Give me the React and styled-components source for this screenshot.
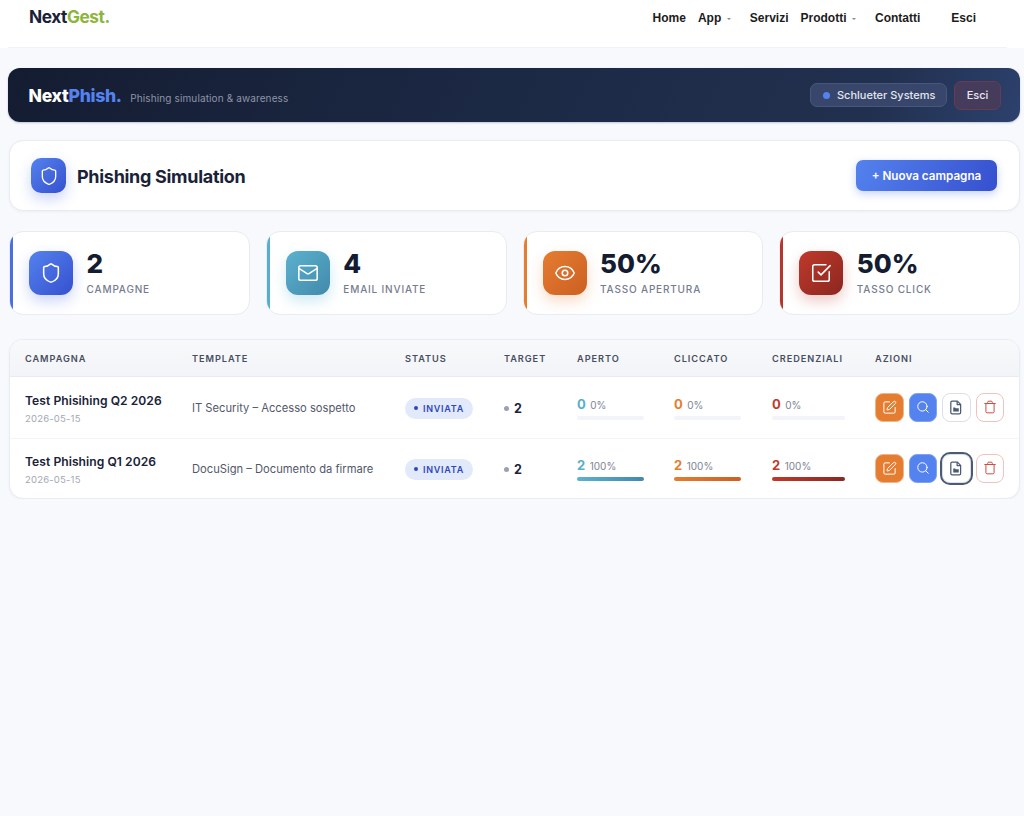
import React from 'react';
import styled, { createGlobalStyle } from 'styled-components';
import { Shield, Mail, Eye, SquareCheckBig, SquarePen, Search, Trash } from 'lucide-react';

const GlobalStyle = createGlobalStyle`
	html, body {
		margin: 0;
		padding: 0;
		background: #f7f9fd;
		font-family: 'Inter', 'Liberation Sans', sans-serif;
		color: #1a2238;
	}
`;

const TopBar = styled.div`
	background: #fff;
`;

const TopNav = styled.nav`
	height: 47px;
	margin: 0 17px 0 8px;
	border-bottom: 1px solid #f0f2f7;
	display: flex;
	justify-content: space-between;
	padding: 0 31px 0 21px;
`;

const NavLogo = styled.div`
	font-size: 17.3px;
	font-weight: 700;
	letter-spacing: -0.45px;
	line-height: 20px;
	padding-top: 7px;
	color: #1a2238;
	span {
		color: #8db53c;
	}
`;

const NavLinks = styled.div`
	display: flex;
	gap: 12px;
	padding-top: 11px;
`;

const NavLink = styled.a`
	font-family: 'Liberation Sans', sans-serif;
	font-size: 12px;
	font-weight: 700;
	line-height: 15px;
	color: #1c1c1c;
	display: flex;
	margin-left: ${(p) => p.$push || 0}px;
`;

const Caret = styled.i`
	width: 0;
	height: 0;
	border-left: 2.5px solid transparent;
	border-right: 2.5px solid transparent;
	border-top: 2.5px solid #8a8a8a;
	margin: 7px 6.5px 0 6px;
`;

const Main = styled.main`
	padding: 20px 4px 0 8px;
	display: flex;
	flex-direction: column;
`;

const Banner = styled.header`
	height: 54px;
	box-sizing: border-box;
	border-radius: 12px;
	background: linear-gradient(115deg, #141c31 0%, #1c2945 50%, #22304f 85%, #2c416d 100%);
	display: flex;
	align-items: center;
	justify-content: space-between;
	padding: 0 19px 0 20.500px;
	box-shadow: 0 1px 2px rgba(30, 50, 90, 0.25);
`;

const BrandGroup = styled.div`
	display: flex;
	align-items: baseline;
	gap: 8.500px;
`;

const BannerLogo = styled.div`
	font-size: 17.6px;
	font-weight: 800;
	letter-spacing: -0.3px;
	color: #fff;
	span {
		color: #5482ee;
	}
`;

const BannerTag = styled.div`
	font-size: 10px;
	letter-spacing: 0.12px;
	color: #8d95a8;
`;

const BannerRight = styled.div`
	display: flex;
	align-items: center;
	gap: 7px;
`;

const OrgPill = styled.div`
	height: 24px;
	width: 137px;
	box-sizing: border-box;
	border-radius: 7px;
	border: 1px solid #46587a;
	background: #37466a;
	display: flex;
	align-items: center;
	gap: 7px;
	padding-left: 12px;
	font-size: 11px;
	font-weight: 500;
	color: #e3e7ef;
`;

const OrgDot = styled.i`
	width: 7px;
	height: 7px;
	border-radius: 50%;
	background: #5482ee;
`;

const ExitButton = styled.button`
	height: 29px;
	width: 47px;
	border-radius: 7px;
	border: 1px solid #6b3a52;
	background: #453c5c;
	color: #e8e8ef;
	font: 500 11px 'Inter', sans-serif;
	padding: 0;
`;

const TitleCard = styled.section`
	margin: 18px 0 0 1px;
	height: 71px;
	box-sizing: border-box;
	background: #fff;
	border: 1px solid #e8ebf2;
	border-radius: 14px;
	display: flex;
	align-items: center;
	justify-content: space-between;
	padding: 0 22px 0 21px;
	box-shadow: 0 1px 3px rgba(30, 50, 90, 0.05);
`;

const TitleGroup = styled.div`
	display: flex;
	align-items: center;
	gap: 11px;
`;

const Heading = styled.h1`
	margin: 0;
	padding-top: 1px;
	font-size: 18px;
	font-weight: 700;
	letter-spacing: -0.3px;
	color: #1a2238;
`;

const IconTile = styled.div`
	width: ${(p) => p.$size}px;
	height: ${(p) => p.$size}px;
	flex: none;
	border-radius: ${(p) => (p.$size > 40 ? 12 : 10)}px;
	background: linear-gradient(135deg, ${(p) => p.$from}, ${(p) => p.$to});
	box-shadow: 0 6px 14px ${(p) => p.$glow};
	display: flex;
	align-items: center;
	justify-content: center;
	color: #fff;
`;

const PrimaryButton = styled.button`
	width: 141px;
	height: 31px;
	border: none;
	border-radius: 7px;
	background: linear-gradient(115deg, #5482ee, #3650cf);
	box-shadow: 0 3px 9px rgba(70, 110, 230, 0.3);
	color: #fff;
	font: 600 11.7px 'Inter', sans-serif;
	padding: 0;
`;

const StatRow = styled.section`
	margin: 20px 0 0 1px;
	display: grid;
	grid-template-columns: repeat(4, 1fr);
	gap: 16px;
`;

const StatCard = styled.article`
	position: relative;
	overflow: hidden;
	height: 84px;
	box-sizing: border-box;
	background: #fff;
	border: 1px solid #e8ebf2;
	border-radius: 14px;
	display: flex;
	align-items: center;
	gap: 13.600px;
	padding: 0 0 0 19px;
	&::before {
		content: '';
		position: absolute;
		left: 0;
		top: 0;
		bottom: 0;
		width: 3px;
		background: ${(p) => p.$accent};
	}
`;

const StatBody = styled.div`
	display: flex;
	flex-direction: column;
	margin-top: -1px;
`;

const StatValue = styled.div`
	font-size: 26px;
	font-weight: 800;
	line-height: 32px;
	color: #141c31;
`;

const StatLabel = styled.div`
	font-size: 10px;
	font-weight: 500;
	letter-spacing: 0.82px;
	line-height: 16px;
	margin-top: 1px;
	color: #767c8e;
`;

const TableCard = styled.section`
	margin: 24px 0 0 1px;
	background: #fff;
	border: 1px solid #e8ebf2;
	border-radius: 14px;
	overflow: hidden;
	box-shadow: 0 1px 3px rgba(30, 50, 90, 0.05);
`;

const Row = styled.div`
	display: grid;
	grid-template-columns: 167px 213px 99px 73px 97px 98px 103px 1fr;
	align-items: center;
	box-sizing: border-box;
	padding: 2px 0 0 15px;
	height: 60.5px;
	border-top: ${(p) => (p.$divider ? '1px solid #f3f4f8' : 'none')};
`;

const HeadRow = styled(Row)`
	height: 37px;
	padding-top: 0;
	background: linear-gradient(180deg, #f8f9fb, #f3f4f7);
	border-bottom: 1px solid #e8ebf2;
`;

const HeadCell = styled.div`
	font-size: 9.2px;
	font-weight: 600;
	letter-spacing: 0.95px;
	color: #474e60;
`;

const CampaignCell = styled.div`
	padding-top: 2px;
`;

const CampaignName = styled.div`
	font-size: 12.1px;
	font-weight: 600;
	line-height: 16px;
	color: #1a2238;
	letter-spacing: 0.05px;
`;

const CampaignDate = styled.div`
	font-size: 9.5px;
	line-height: 14px;
	margin-top: 3px;
	color: #a3a8b5;
	letter-spacing: 0.2px;
`;

const TemplateName = styled.div`
	font-size: 11.2px;
	color: #525869;
`;

const StatusBadge = styled.span`
	width: 68px;
	height: 21px;
	border-radius: 11px;
	background: #e1e9fb;
	color: #3047b8;
	font-size: 9px;
	font-weight: 600;
	letter-spacing: 0.75px;
	display: flex;
	align-items: center;
	justify-content: center;
	gap: 5px;
	&::before {
		content: '';
		width: 4px;
		height: 4px;
		border-radius: 50%;
		background: #3047b8;
	}
`;

const TargetCell = styled.div`
	display: flex;
	align-items: center;
	gap: 5px;
	font-size: 12.5px;
	font-weight: 700;
	color: #1a2238;
	&::before {
		content: '';
		width: 5px;
		height: 5px;
		border-radius: 50%;
		background: #99a1b3;
	}
`;

const MetricCell = styled.div`
	width: ${(p) => (p.$wide ? 73 : 67)}px;
`;

const MetricTop = styled.div`
	display: flex;
	align-items: baseline;
	gap: 4.500px;
	height: 17px;
`;

const MetricCount = styled.span`
	font-size: 13px;
	font-weight: 700;
	color: ${(p) => p.$color};
`;

const MetricPct = styled.span`
	font-size: 10px;
	color: #7d8393;
`;

const Track = styled.div`
	height: 4px;
	margin-top: 3px;
	border-radius: 2px;
	background: #f3f4fa;
	overflow: hidden;
`;

const Fill = styled.div`
	height: 100%;
	background: linear-gradient(90deg, ${(p) => p.$from}, ${(p) => p.$to});
`;

const Actions = styled.div`
	display: flex;
	align-items: center;
	gap: 5px;
	margin-top: -2px;
`;

const ActionButton = styled.button`
	width: 28.500px;
	height: 28.500px;
	box-sizing: border-box;
	padding: 0;
	border-radius: 8px;
	border: 1px solid ${(p) => p.$border};
	background: ${(p) => p.$bg};
	color: ${(p) => p.$color};
	display: flex;
	align-items: center;
	justify-content: center;
	outline: ${(p) => (p.$focused ? '2px solid #4c5a74' : 'none')};
	outline-offset: 0;
`;

const stats = [
	{ icon: Shield, value: '2', label: 'CAMPAGNE', accent: '#4a6fe3', from: '#5482ee', to: '#3650cf', glow: 'rgba(70,100,230,.28)' },
	{ icon: Mail, value: '4', label: 'EMAIL INVIATE', accent: '#58afcb', from: '#5bb2cf', to: '#4289aa', glow: 'rgba(80,180,210,.28)' },
	{ icon: Eye, value: '50%', label: 'TASSO APERTURA', accent: '#e57d31', from: '#e57d31', to: '#cc5f22', glow: 'rgba(225,125,50,.28)' },
	{ icon: SquareCheckBig, value: '50%', label: 'TASSO CLICK', accent: '#b5362a', from: '#c0392b', to: '#8b2720', glow: 'rgba(180,50,40,.26)' }
];

const headers = ['CAMPAGNA', 'TEMPLATE', 'STATUS', 'TARGET', 'APERTO', 'CLICCATO', 'CREDENZIALI', 'AZIONI'];

const campaigns = [
	{ name: 'Test Phisihing Q2 2026', template: 'IT Security – Accesso sospetto', count: 0, pct: 0 },
	{ name: 'Test Phishing Q1 2026', template: 'DocuSign – Documento da firmare', count: 2, pct: 100, focused: true }
];

// small report icon, page with a fold and a tiny folder inside
function ReportIcon() {
	return (
		<svg width='14' height='15' viewBox='0 0 12 13' fill='none' stroke='currentColor' strokeWidth='1.1' strokeLinejoin='round'>
			<path d='M2.600 1h4.600L10 3.800v7.100c0 .6-.5 1.100-1.100 1.100H2.600c-.6 0-1.100-.5-1.100-1.100V2.100C1.500 1.500 2 1 2.600 1z' />
			<path d='M7 1v3h3' />
			<path d='M3.800 6.800h1.500l.6.6h2.300v2.400H3.800z' fill='currentColor' strokeWidth='.4' />
		</svg>
	);
}

function Metric({ count, pct, color, from, to, wide }) {
	return (
		<MetricCell $wide={wide}>
			<MetricTop>
				<MetricCount $color={color}>{count}</MetricCount>
				<MetricPct>{pct}%</MetricPct>
			</MetricTop>
			<Track>
				<Fill $from={from} $to={to} style={{ width: `${pct}%` }} />
			</Track>
		</MetricCell>
	);
}

export default function App() {
	return (
		<>
			<GlobalStyle />
			<TopBar>
				<TopNav>
					<NavLogo>
						Next<span>Gest.</span>
					</NavLogo>
					<NavLinks>
						<NavLink>Home</NavLink>
						<NavLink>
							App
							<Caret />
						</NavLink>
						<NavLink>Servizi</NavLink>
						<NavLink>
							Prodotti
							<Caret />
						</NavLink>
						<NavLink>Contatti</NavLink>
						<NavLink $push={19}>Esci</NavLink>
					</NavLinks>
				</TopNav>
			</TopBar>
			<Main>
				<Banner>
					<BrandGroup>
						<BannerLogo>
							Next<span>Phish.</span>
						</BannerLogo>
						<BannerTag>Phishing simulation &amp; awareness</BannerTag>
					</BrandGroup>
					<BannerRight>
						<OrgPill>
							<OrgDot />
							Schlueter Systems
						</OrgPill>
						<ExitButton>Esci</ExitButton>
					</BannerRight>
				</Banner>
				<TitleCard>
					<TitleGroup>
						<IconTile $size={35} $from='#5482ee' $to='#3650cf' $glow='rgba(70,100,230,.28)'>
							<Shield size={20} strokeWidth={1.6} />
						</IconTile>
						<Heading>Phishing Simulation</Heading>
					</TitleGroup>
					<PrimaryButton>+ Nuova campagna</PrimaryButton>
				</TitleCard>
				<StatRow>
					{stats.map((s) => (
						<StatCard key={s.label} $accent={s.accent}>
							<IconTile $size={44} $from={s.from} $to={s.to} $glow={s.glow}>
								<s.icon size={22} strokeWidth={1.7} />
							</IconTile>
							<StatBody>
								<StatValue>{s.value}</StatValue>
								<StatLabel>{s.label}</StatLabel>
							</StatBody>
						</StatCard>
					))}
				</StatRow>
				<TableCard>
					<HeadRow>
						{headers.map((h) => (
							<HeadCell key={h}>{h}</HeadCell>
						))}
					</HeadRow>
					{campaigns.map((c, i) => (
						<Row key={c.name} $divider={i > 0}>
							<CampaignCell>
								<CampaignName>{c.name}</CampaignName>
								<CampaignDate>2026-05-15</CampaignDate>
							</CampaignCell>
							<TemplateName>{c.template}</TemplateName>
							<div>
								<StatusBadge>INVIATA</StatusBadge>
							</div>
							<TargetCell>2</TargetCell>
							<Metric count={c.count} pct={c.pct} color='#58afcb' from='#5bb2cf' to='#4289aa' />
							<Metric count={c.count} pct={c.pct} color='#e57d31' from='#e57d31' to='#cc5f22' />
							<Metric count={c.count} pct={c.pct} color='#c0392b' from='#c0392b' to='#8b2720' wide />
							<Actions>
								<ActionButton $bg='#e57d31' $border='#f0b48a' $color='#fff'>
									<SquarePen size={15} strokeWidth={1.6} />
								</ActionButton>
								<ActionButton $bg='#5482ee' $border='#7fa2f2' $color='#fff'>
									<Search size={14} strokeWidth={1.7} />
								</ActionButton>
								<ActionButton $bg='#fff' $border='#d9e0eb' $color='#4c5a74' $focused={c.focused}>
									<ReportIcon />
								</ActionButton>
								<ActionButton $bg='#fff' $border='#f3c2bd' $color='#cf4a40'>
									<Trash size={14} strokeWidth={1.7} />
								</ActionButton>
							</Actions>
						</Row>
					))}
				</TableCard>
			</Main>
		</>
	);
}
